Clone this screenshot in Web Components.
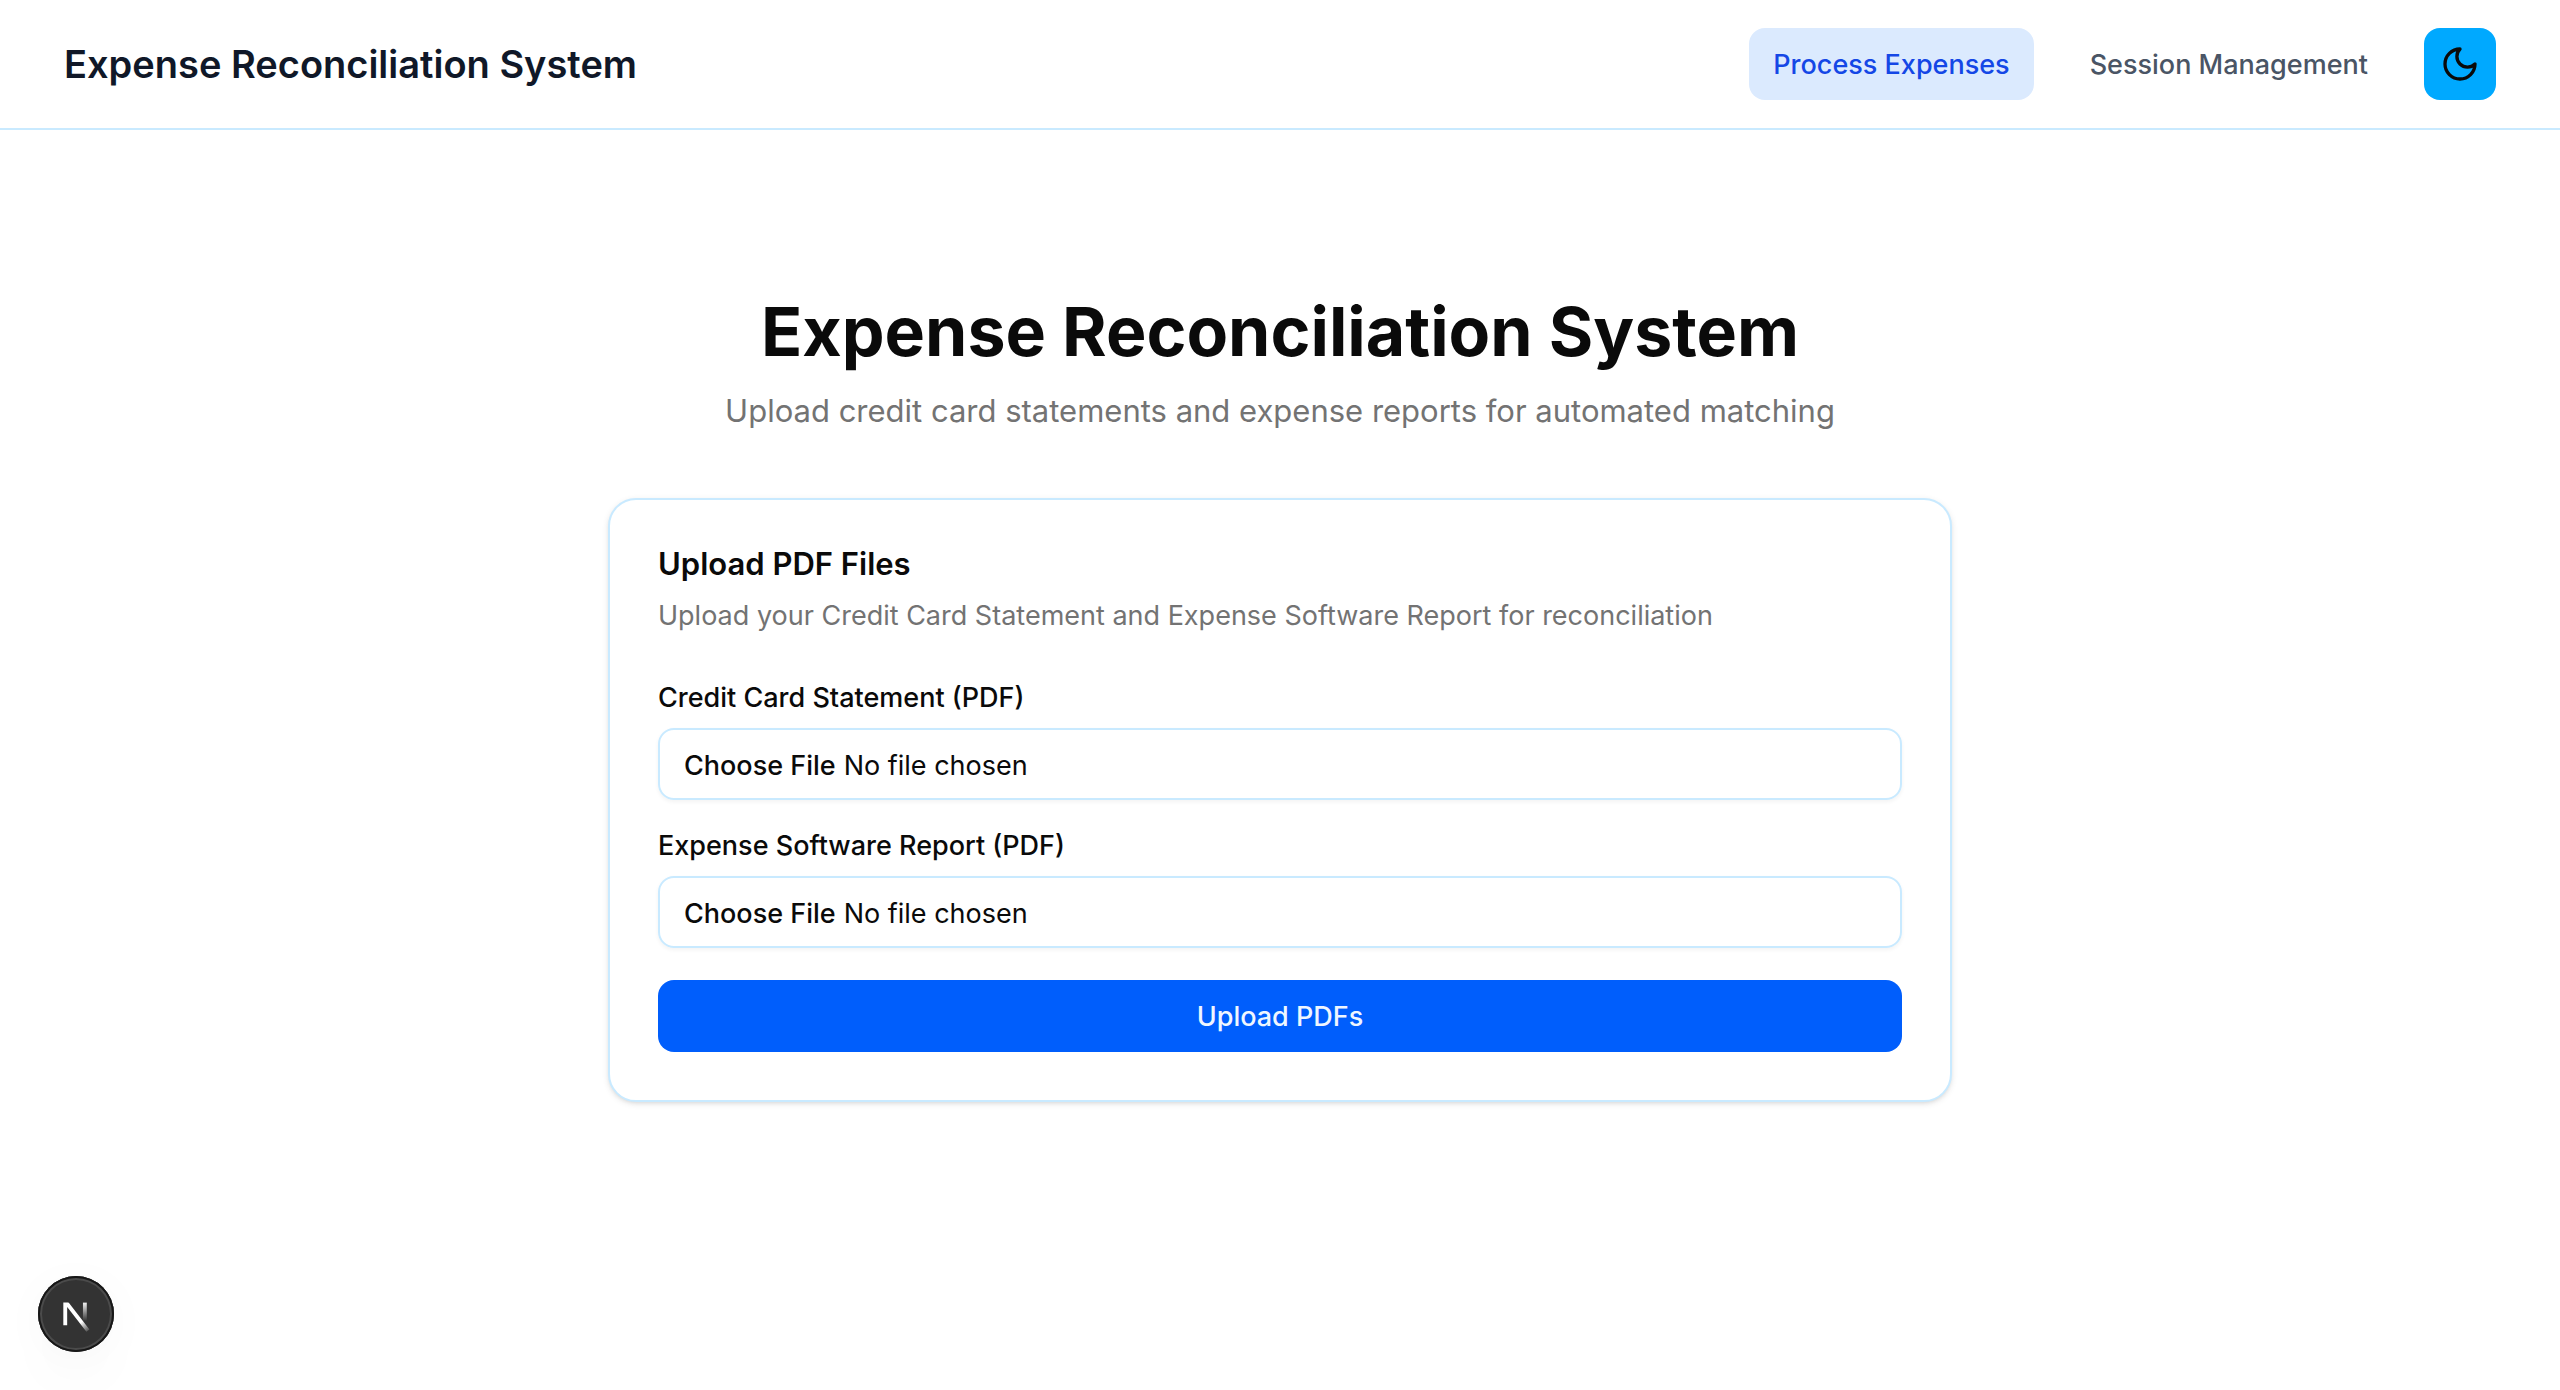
<!DOCTYPE html>
<html lang="en">
<head>
<meta charset="utf-8">
<meta name="viewport" content="width=device-width, initial-scale=1">
<title>Expense Reconciliation System</title>
<style>
  :root {
    --border: #c9eaff;
    --muted: #737373;
    --primary: #005efc;
    --accent: #00a9ff;
    --text-sm: 27px;
    --text-base: 31px;
    --radius: 16px;
  }
  body {
    margin: 0;
    min-height: 100vh;
    background: #fff;
    color: #0a0a0a;
    font-family: Inter, "Liberation Sans", sans-serif;
    font-size: 27px;
  }
</style>
</head>
<body>
<app-header>
  <nav-link href="#process" current>Process Expenses</nav-link>
  <nav-link href="#sessions">Session Management</nav-link>
</app-header>
<page-main>
  <page-intro>
    <span slot="title">Expense Reconciliation System</span>
    <span slot="subtitle">Upload credit card statements and expense reports for automated matching</span>
  </page-intro>
  <upload-card>
    <span slot="title">Upload PDF Files</span>
    <span slot="description">Upload your Credit Card Statement and Expense Software Report for reconciliation</span>
    <file-field label="Credit Card Statement (PDF)"></file-field>
    <file-field label="Expense Software Report (PDF)"></file-field>
    <primary-button>Upload PDFs</primary-button>
  </upload-card>
</page-main>
<dev-badge></dev-badge>

<script>
function define(name, html) {
  const template = document.createElement("template");
  template.innerHTML = "<style>*{box-sizing:border-box}</style>" + html;
  customElements.define(name, class extends HTMLElement {
    constructor() {
      super();
      const root = this.attachShadow({ mode: "open" });
      root.append(template.content.cloneNode(true));
    }
    connectedCallback() {
      const link = this.shadowRoot.querySelector("a");
      if (link) {
        link.href = this.getAttribute("href");
        if (this.hasAttribute("current")) link.setAttribute("aria-current", "page");
      }
      const label = this.shadowRoot.querySelector("label");
      if (label) label.textContent = this.getAttribute("label");
    }
  });
}

define("theme-toggle", `
  <style>
    :host { display: block; }
    button { display: flex; align-items: center; justify-content: center; width: 72px; height: 72px;
      padding: 0; border: 0; border-radius: var(--radius); background: var(--accent); color: #0a0a0a; cursor: pointer; }
    svg { width: 40px; height: 40px; }
  </style>
  <button type="button" aria-label="Toggle theme">
    <svg viewBox="0 0 24 24" fill="none" stroke="currentColor" stroke-width="2" stroke-linecap="round" stroke-linejoin="round">
      <path d="M12 3a6 6 0 0 0 9 9 9 9 0 1 1-9-9Z"/>
    </svg>
  </button>`);

define("nav-link", `
  <style>
    :host { display: block; }
    a { display: flex; align-items: center; height: 72px; padding: 0 24px; border-radius: var(--radius);
      color: #4a5565; font-size: var(--text-sm); font-weight: 500; text-decoration: none; white-space: nowrap; }
    a[aria-current] { background: #dbeafe; color: #1447e6; }
  </style>
  <a><slot></slot></a>`);

define("app-header", `
  <style>
    :host { display: block; border-bottom: 2px solid var(--border); }
    header { display: flex; align-items: center; justify-content: space-between; padding: 28px 64px; }
    .brand { color: #101828; font-size: 38px; line-height: 56px; font-weight: 600; }
    .actions, nav { display: flex; align-items: center; gap: 32px; }
  </style>
  <header>
    <div class="brand">Expense Reconciliation System</div>
    <div class="actions">
      <nav><slot></slot></nav>
      <theme-toggle></theme-toggle>
    </div>
  </header>`);

define("page-main", `
  <style>
    :host { display: block; }
    main { display: flex; flex-direction: column; gap: 64px; max-width: 1344px; margin: 0 auto; padding: 160px 0; }
  </style>
  <main><slot></slot></main>`);

define("page-intro", `
  <style>
    :host { display: flex; flex-direction: column; gap: 16px; text-align: center; }
    h1 { margin: 0; font-size: 68px; line-height: 82px; font-weight: 700; }
    p { margin: 0; color: var(--muted); font-size: var(--text-base); line-height: 46px; }
  </style>
  <h1><slot name="title"></slot></h1>
  <p><slot name="subtitle"></slot></p>`);

define("upload-card", `
  <style>
    :host { display: block; }
    section { display: flex; flex-direction: column; gap: 48px; padding: 48px; border: 2px solid var(--border);
      border-radius: 28px; background: #fff; box-shadow: 0 2px 6px rgba(0,0,0,.1), 0 2px 4px -2px rgba(0,0,0,.1); }
    .head { display: flex; flex-direction: column; gap: 16px; }
    h2 { margin: 0; font-size: var(--text-base); line-height: 32px; font-weight: 600; }
    p { margin: 0; color: var(--muted); font-size: var(--text-sm); line-height: 40px; }
    form { display: flex; flex-direction: column; gap: 32px; }
  </style>
  <section>
    <div class="head">
      <h2><slot name="title"></slot></h2>
      <p><slot name="description"></slot></p>
    </div>
    <form><slot></slot></form>
  </section>`);

define("file-field", `
  <style>
    :host { display: flex; flex-direction: column; gap: 16px; }
    label { font-size: var(--text-sm); line-height: 28px; font-weight: 500; }
    input { width: 100%; height: 72px; padding: 8px 24px; border: 2px solid var(--border); border-radius: var(--radius);
      background: transparent; color: inherit; font: 400 var(--text-sm)/40px Inter, "Liberation Sans", sans-serif;
      box-shadow: 0 2px 4px rgba(0,0,0,.05); }
    input::file-selector-button { height: 56px; margin: 0 8px 0 0; padding: 0; border: 0; background: transparent;
      color: inherit; font: inherit; font-weight: 500; }
  </style>
  <label for="file"></label>
  <input id="file" type="file" accept="application/pdf">`);

define("primary-button", `
  <style>
    :host { display: block; }
    button { display: block; width: 100%; height: 72px; padding: 0 32px; border: 0; border-radius: var(--radius);
      background: var(--primary); color: #eff6ff; font: inherit; font-size: var(--text-sm); font-weight: 500; cursor: pointer; }
  </style>
  <button type="button"><slot></slot></button>`);

define("dev-badge", `
  <style>
    :host { position: fixed; left: 38px; bottom: 38px; }
    button { display: block; width: 76px; height: 76px; padding: 0; border: 0; border-radius: 50%; background: #333;
      box-shadow: inset 0 0 0 2px #171717, inset 0 0 0 4px #4b4b4b, 0 32px 64px -16px rgba(0,0,0,.06), 0 8px 48px rgba(0,0,0,.03); cursor: pointer; }
    svg { display: block; width: 76px; height: 76px; }
  </style>
  <button type="button" aria-label="Open developer tools">
    <svg viewBox="0 0 76 76" fill="none">
      <defs>
        <linearGradient id="diagonal" gradientUnits="userSpaceOnUse" x1="9.95" y1="11.13" x2="13.9" y2="16.2">
          <stop stop-color="#fff"/><stop offset="1" stop-color="#fff" stop-opacity="0"/>
        </linearGradient>
        <linearGradient id="upright" gradientUnits="userSpaceOnUse" x1="11.8" y1="1" x2="11.83" y2="10.6">
          <stop stop-color="#fff"/><stop offset="1" stop-color="#fff" stop-opacity="0"/>
        </linearGradient>
        <clipPath id="top"><rect y="1.6" width="20" height="18"/></clipPath>
      </defs>
      <g transform="translate(22.4 23.2) scale(2.07)" stroke-width="1.86" clip-path="url(#top)">
        <path d="M13.3 15.2 2.34 1V12.6" stroke="url(#diagonal)"/>
        <path d="M11.825 1.5v11.6h.001" stroke="url(#upright)"/>
      </g>
    </svg>
  </button>`);
</script>
</body>
</html>
